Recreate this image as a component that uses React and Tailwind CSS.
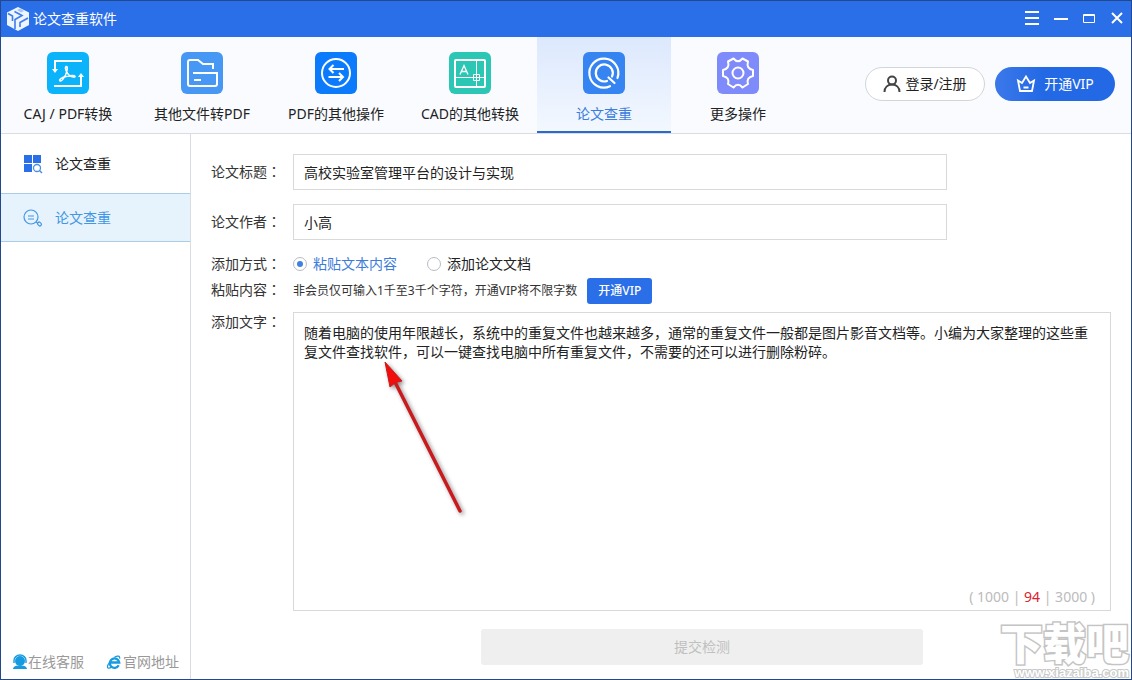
import { useState } from 'react'

const ARTICLE =
  '随着电脑的使用年限越长，系统中的重复文件也越来越多，通常的重复文件一般都是图片影音文档等。小编为大家整理的这些重复文件查找软件，可以一键查找电脑中所有重复文件，不需要的还可以进行删除粉碎。'

function LogoIcon() {
  return (
    <svg width="22" height="24" viewBox="0 0 22 24" aria-hidden="true">
      <path d="M11 0 22 5.5V18L11 24 0 18V5.5Z" fill="#edf5ff" />
      <path
        d="M1 6.500 5.500 9v5M7.500 4.500 15 8.500 8 12.500v9.500M13 20V15.500L21 11"
        fill="none"
        stroke="#3f7be9"
        strokeWidth="1.600"
      />
      <path d="m10 3 3-1.500 4 2.500-3 1.500Z" fill="#a9c6f8" />
    </svg>
  )
}

function ConvertIcon() {
  return (
    <svg width="42" height="42" viewBox="0 0 42 42" fill="none" stroke="#fff" strokeWidth="2" aria-hidden="true">
      <path d="M35 9H8v9M7 34h27v-9" />
      <path d="M5 17h6l-3 4ZM31 25h6l-3-4Z" fill="#fff" stroke="none" />
      <path
        d="M19 14.500c2.500-.5 1 5-.5 8.500-1.500 3-4 6.500-5.500 5.800s2-3.600 6-4.300c3.500-.8 8.500-1.500 9-.2s-3 1-5.500-.8c-3-2.200-5-8-3.500-9Z"
        strokeWidth="1.500"
      />
    </svg>
  )
}

function FolderIcon() {
  return (
    <svg width="42" height="42" viewBox="0 0 42 42" fill="none" stroke="#fff" strokeWidth="2" aria-hidden="true">
      <path d="M12 21h24v11q0 2-2 2H9q-2 0-2-2V10q0-2 2-2h8l5 4h10v5M13 28h7" />
    </svg>
  )
}

function SwapIcon() {
  return (
    <svg width="42" height="42" viewBox="0 0 42 42" fill="none" stroke="#fff" strokeWidth="2" aria-hidden="true">
      <circle cx="21" cy="21" r="14" />
      <path d="M29 17H15M18.500 13 14.500 17l4 4M13.500 25h14M24 21l4 4-4 4" />
    </svg>
  )
}

function CadIcon() {
  return (
    <svg width="42" height="42" viewBox="0 0 42 42" fill="none" stroke="#fff" aria-hidden="true">
      <rect x="6" y="8" width="30" height="27" rx="1" strokeWidth="2" />
      <path d="M6 25.500h30M27.500 8v27M24.500 22.500h6v6h-6z" />
      <path d="m11 22.500 4-9 4 9M12.500 19.500h5" strokeWidth="1.300" />
    </svg>
  )
}

function CheckIcon() {
  return (
    <svg width="42" height="42" viewBox="0 0 42 42" fill="none" stroke="#fff" strokeWidth="2.200" strokeLinecap="round" aria-hidden="true">
      <path d="M34.500 26A14.500 14.500 0 1 0 27 34.200" />
      <path d="M29 24.500A8.500 8.500 0 1 0 24 29M25.500 25.500l6 5.500" />
    </svg>
  )
}

function GearIcon() {
  return (
    <svg width="42" height="42" viewBox="0 0 42 42" fill="none" stroke="#fff" strokeWidth="2" strokeLinejoin="round" aria-hidden="true">
      <circle cx="21" cy="21" r="5.500" />
      <path d="M16.500 6.500Q21 12 25.500 6.500L31 9.500Q29 16.500 36 18v6q-7 1.500-5 8l-5.500 3.500Q21 30 16.500 35.500L11 32q2-6.500-5-8v-6q7-1.500 5-8.500Z" />
    </svg>
  )
}

const TABS = [
  { label: 'CAJ / PDF转换', icon: ConvertIcon, bg: 'bg-[#0bb4fa]' },
  { label: '其他文件转PDF', icon: FolderIcon, bg: 'bg-[#4798f5]' },
  { label: 'PDF的其他操作', icon: SwapIcon, bg: 'bg-[#0c7bfb]' },
  { label: 'CAD的其他转换', icon: CadIcon, bg: 'bg-[#2bc6b4]' },
  { label: '论文查重', icon: CheckIcon, bg: 'bg-[#3684f1]', active: true },
  { label: '更多操作', icon: GearIcon, bg: 'bg-[#7f8bfa]' },
]

function TitleBar() {
  return (
    <header className="flex h-9 shrink-0 items-center justify-between bg-[#2a6ee8] pr-[7px] pl-1.5 text-white">
      <div className="flex items-center gap-1">
        <LogoIcon />
        <h1 className="text-sm">论文查重软件</h1>
      </div>
      <div className="flex gap-3.5">
        <button type="button" aria-label="菜单">
          <svg width="15" height="16" viewBox="0 0 15 16" stroke="#fff" strokeWidth="2">
            <path d="M0 1h14M0 7h14M0 13h14" />
          </svg>
        </button>
        <button type="button" aria-label="最小化">
          <svg width="15" height="16" viewBox="0 0 15 16" stroke="#fff" strokeWidth="2">
            <path d="M0 8h14" />
          </svg>
        </button>
        <button type="button" aria-label="最大化">
          <svg width="14" height="16" viewBox="0 0 14 16" fill="none" stroke="#fff">
            <path d="M.5 3.500h11v8H.5zM0 4.500h12" />
          </svg>
        </button>
        <button type="button" aria-label="关闭">
          <svg width="13" height="16" viewBox="0 0 13 16" stroke="#fff" strokeWidth="2">
            <path d="m1 2 10 10M11 2 1 12" />
          </svg>
        </button>
      </div>
    </header>
  )
}

function Toolbar() {
  return (
    <div className="flex h-[97px] shrink-0 items-center justify-between border-b border-[#d9dce2] bg-[#f9fbff]">
      <nav className="flex h-full">
        {TABS.map(({ label, icon: Icon, bg, active }) => (
          <button
            key={label}
            type="button"
            className={`flex w-[134px] flex-col items-center gap-2.5 border-b-2 pt-[15px] text-sm ${
              active
                ? 'border-[#2c69c8] bg-linear-to-b from-[#dce8fd] to-[#f3f8ff] text-[#3c7ddb]'
                : 'border-transparent text-[#222]'
            }`}
          >
            <span className={`rounded-md ${bg}`}>
              <Icon />
            </span>
            {label}
          </button>
        ))}
      </nav>
      <div className="flex gap-2.5 pr-4 pb-0.5 text-sm">
        <button
          type="button"
          className="flex h-[34px] w-[120px] items-center justify-center gap-1 rounded-full border border-[#d2d5da] bg-white text-[#222]"
        >
          <svg width="18" height="18" viewBox="0 0 18 18" fill="none" stroke="#444" strokeWidth="2" aria-hidden="true">
            <circle cx="9" cy="5.500" r="4" />
            <path d="M1.500 17c0-5 3.500-7.500 7.500-7.500s7.500 2.500 7.500 7.500" />
          </svg>
          登录/注册
        </button>
        <button
          type="button"
          className="flex h-[34px] w-[120px] items-center justify-center gap-2 rounded-full bg-[#2a6ee8] bg-linear-to-r from-[#3b78ea] to-[#2369e5] to-40% text-white"
        >
          <svg width="20" height="18" viewBox="0 0 20 18" fill="none" stroke="#fff" strokeWidth="1.800" aria-hidden="true">
            <path d="M2 5.500 6 8l4-6.500L14 8l4-2.500L16 16H4ZM7.500 12.500h5" />
          </svg>
          开通VIP
        </button>
      </div>
    </div>
  )
}

function Sidebar() {
  return (
    <aside className="flex w-[190px] shrink-0 flex-col border-r border-[#d9dce2] bg-white">
      <a href="#check" className="flex h-[59px] items-center gap-3 pl-[22px] text-sm text-[#222]">
        <svg width="20" height="20" viewBox="0 0 20 20" fill="#2a6ee8" aria-hidden="true">
          <path d="M1 1h8v8H1zM10 1h8v8h-8zM1 10h8v8H1z" />
          <circle cx="14" cy="14" r="4.500" fill="#fff" />
          <circle cx="14" cy="14" r="3.500" fill="#fff" stroke="#4a90e2" strokeWidth="1.300" />
          <path d="m16.500 16.500 2.500 2.500" stroke="#4a90e2" strokeWidth="1.500" />
        </svg>
        论文查重
      </a>
      <a
        href="#check-paper"
        className="flex h-[49px] items-center gap-3 border-y border-[#a9cde6] bg-[#e6f3fc] pl-[22px] text-sm text-[#4396e4]"
      >
        <svg width="20" height="20" viewBox="0 0 20 20" fill="none" stroke="#4396e4" strokeWidth="1.200" aria-hidden="true">
          <circle cx="8" cy="9" r="7" />
          <path d="M5 8h6M5 11h6M13 14l2 1.500" />
          <rect x="14.500" y="14.500" width="4" height="3" rx="1.300" transform="rotate(42 16.500 16)" />
        </svg>
        论文查重
      </a>
      <div className="mt-auto flex gap-[22px] pb-[7px] pl-[11px] text-sm text-[#999]">
        <a href="#service" className="flex items-center">
          <svg width="16" height="16" viewBox="0 0 16 16" aria-hidden="true">
            <circle cx="8" cy="7" r="5" fill="#169be0" />
            <path d="M2 9V6.500a6 5.500 0 0 1 12 0V9" fill="none" stroke="#169be0" strokeWidth="1.400" />
            <path d="M1 15c.5-3 3-3 5-3.500h4c2 .5 4.500.5 5 3.500Z" fill="#169be0" />
          </svg>
          在线客服
        </a>
        <a href="#website" className="flex items-center gap-px">
          <svg width="16" height="16" viewBox="0 0 17 16" fill="none" stroke="#169be0" aria-hidden="true">
            <path d="M13.500 11.500a5 5 0 1 1 .5-3H5" strokeWidth="2.500" />
            <path d="M3.500 9C1 12 1 15 3 14.500c1 0 2-.5 3-1.500M9 3c3-2 6-2 5.500 1.500" strokeWidth="1.300" />
          </svg>
          官网地址
        </a>
      </div>
    </aside>
  )
}

// full-width colon sits in the middle of its cell in the TC face
function Colon() {
  return <span className="font-['Noto_Sans_CJK_TC',sans-serif] leading-none">：</span>
}

function Radio({ label, value, checked, onChange }) {
  return (
    <label className={`flex items-center gap-1.5 ${checked ? 'text-[#3c7ddb]' : 'text-[#222]'}`}>
      <input
        type="radio"
        name="mode"
        value={value}
        checked={checked}
        onChange={() => onChange(value)}
        className="size-3.5 appearance-none rounded-full border border-[#b8bcc2] bg-white bg-clip-content p-[3px] checked:bg-[#3c82e0]"
      />
      {label}
    </label>
  )
}

function PaperForm() {
  const [title, setTitle] = useState('高校实验室管理平台的设计与实现')
  const [author, setAuthor] = useState('小高')
  const [mode, setMode] = useState('paste')
  const [text, setText] = useState(ARTICLE)

  return (
    <form className="grid flex-1 grid-cols-[82px_1fr] grid-rows-[36px_50px_34px_30px_1fr_auto] px-5 pt-5 pb-3.5 text-sm text-[#333]">
      <label htmlFor="title" className="leading-9">
        论文标题<Colon />
      </label>
      <input
        id="title"
        value={title}
        onChange={(e) => setTitle(e.target.value)}
        className="h-9 w-4/5 border border-[#d9d9d9] px-2.5 text-[#222]"
      />

      <label htmlFor="author" className="mt-3.5 leading-9">
        论文作者<Colon />
      </label>
      <input
        id="author"
        value={author}
        onChange={(e) => setAuthor(e.target.value)}
        className="mt-3.5 h-9 w-4/5 border border-[#d9d9d9] px-2.5 text-[#222]"
      />

      <span id="mode-label" className="mt-3.5">
        添加方式<Colon />
      </span>
      <div role="radiogroup" aria-labelledby="mode-label" className="mt-3.5 flex gap-[30px]">
        <Radio label="粘贴文本内容" value="paste" checked={mode === 'paste'} onChange={setMode} />
        <Radio label="添加论文文档" value="file" checked={mode === 'file'} onChange={setMode} />
      </div>

      <span className="mt-1 leading-6">
        粘贴内容<Colon />
      </span>
      <div className="mt-1 flex items-center gap-2.5 text-xs">
        <span>非会员仅可输入1千至3千个字符，开通VIP将不限字数</span>
        <button type="button" className="h-[26px] w-[65px] rounded-[3px] bg-[#2a6ee8] font-medium text-white">
          开通VIP
        </button>
      </div>

      <label htmlFor="content" className="mt-2">
        添加文字<Colon />
      </label>
      <div className="relative mt-2 flex">
        <textarea
          id="content"
          value={text}
          onChange={(e) => setText(e.target.value)}
          className="w-full resize-none border border-[#d9d9d9] px-2.5 py-2.5 leading-[19px] text-[#222]"
        />
        <p className="absolute right-4 bottom-1 text-[#bbb]">
          ( 1000 | <span className="text-[#d9232e]">94</span> | 3000 )
        </p>
        {/* pointer to the pasted text */}
        <svg
          width="90"
          height="164"
          viewBox="0 0 90 164"
          className="absolute top-[46px] left-[88px] drop-shadow-[2px_2px_2px_rgba(0,0,0,0.45)]"
          aria-hidden="true"
        >
          <path d="M14 24 79 153" stroke="#c91a1e" strokeWidth="3.500" strokeLinecap="round" />
          <path d="M4 4 21 23 14.500 24.500 9 29Z" fill="#f20d0d" stroke="#c91a1e" />
        </svg>
      </div>

      <button
        type="submit"
        disabled
        className="col-start-2 mt-[18px] h-9 w-[54%] justify-self-center rounded-[3px] bg-[#efefef] text-[#bfbfbf]"
      >
        提交检测
      </button>
    </form>
  )
}

function Watermark() {
  return (
    <div className="pointer-events-none absolute right-0.5 bottom-0 flex flex-col items-end font-bold text-white">
      <span className="text-[43px] leading-[46px] font-black [-webkit-text-stroke:3px_#c4c4c4] [paint-order:stroke]">
        下载吧
      </span>
      <span className="font-['Liberation_Sans',sans-serif] text-[13px] leading-3 [-webkit-text-stroke:2px_#c8c8c8] [paint-order:stroke]">
        www.xiazaiba.com
      </span>
    </div>
  )
}

export default function App() {
  return (
    <div className="relative flex min-h-screen flex-col border border-[#24488c] bg-white font-['Noto_Sans','Noto_Sans_CJK_SC',sans-serif]">
      <TitleBar />
      <Toolbar />
      <div className="flex flex-1">
        <Sidebar />
        <main className="flex flex-1">
          <PaperForm />
        </main>
      </div>
      <Watermark />
    </div>
  )
}
